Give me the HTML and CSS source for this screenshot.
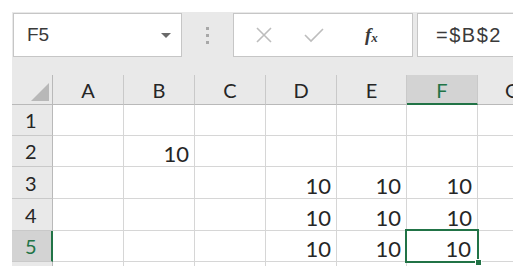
FILE: index.html
```html
<!DOCTYPE html>
<html>
<head>
<meta charset="utf-8">
<link rel="stylesheet" href="styles.css">
</head>
<body>
<div class="app">
  <div class="toolbar">
    <div class="namebox">
      <span class="name">F5</span>
      <svg class="caret" width="10" height="6" viewBox="0 0 10 6"><path d="M0 0H10L5 5Z" fill="#6a6a6a"/></svg>
    </div>
    <div class="dots"><i></i><i></i><i></i></div>
    <div class="fbuttons">
      <svg class="ico" width="20" height="20" viewBox="0 0 20 20"><path d="M3 3L17 17M17 3L3 17" stroke="#bdbdbd" stroke-width="1.6" fill="none"/></svg>
      <svg class="ico" width="22" height="20" viewBox="0 0 22 20"><path d="M2 10L8 16L20 4" stroke="#bdbdbd" stroke-width="1.6" fill="none"/></svg>
      <span class="fx">f<sub>x</sub></span>
    </div>
    <div class="finput">=$B$2</div>
  </div>
  <div class="grid">
    <div class="h corner"><svg width="18" height="18" viewBox="0 0 18 18"><path d="M18 0V18H0Z" fill="#b8b8b8"/></svg></div>
    <div class="h col">A</div>
    <div class="h col">B</div>
    <div class="h col">C</div>
    <div class="h col">D</div>
    <div class="h col">E</div>
    <div class="h col sel-col">F</div>
    <div class="h col clip">G</div>

    <div class="h row">1</div>
    <div class="c"></div><div class="c"></div><div class="c"></div><div class="c"></div><div class="c"></div><div class="c"></div><div class="c"></div>

    <div class="h row">2</div>
    <div class="c"></div><div class="c">10</div><div class="c"></div><div class="c"></div><div class="c"></div><div class="c"></div><div class="c"></div>

    <div class="h row">3</div>
    <div class="c"></div><div class="c"></div><div class="c"></div><div class="c">10</div><div class="c">10</div><div class="c">10</div><div class="c"></div>

    <div class="h row">4</div>
    <div class="c"></div><div class="c"></div><div class="c"></div><div class="c">10</div><div class="c">10</div><div class="c">10</div><div class="c"></div>

    <div class="h row sel-row">5</div>
    <div class="c"></div><div class="c"></div><div class="c"></div><div class="c">10</div><div class="c">10</div><div class="c active">10<span class="selbox"></span><span class="handle"></span></div><div class="c"></div>

    <div class="h row stub"></div>
    <div class="c stub"></div><div class="c stub"></div><div class="c stub"></div><div class="c stub"></div><div class="c stub"></div><div class="c stub"></div><div class="c stub"></div>
  </div>
</div>
</body>
</html>
```
FILE: styles.css
```css
* { box-sizing: border-box; }
body {
  margin: 0;
  background: #ffffff;
  width: 526px;
  height: 279px;
  overflow: hidden;
}
.app {
  margin: 12px 0 0 12px;
  width: 501px;
  overflow: hidden;
  background: #e9e9e9;
}
.toolbar {
  display: flex;
  align-items: flex-start;
  height: 63px;
  padding: 1px 0 0 1px;
}
.toolbar > * { flex-shrink: 0; }
.namebox {
  width: 169px;
  height: 44px;
  background: #fff;
  border: 1px solid #c6c6c6;
  display: flex;
  align-items: center;
  justify-content: space-between;
  padding: 0 10px 0 13px;
}
.name {
  font-family: "Liberation Sans", Arial, sans-serif;
  font-size: 19px;
  color: #3a3a3a;
}
.caret { margin-top: 2px; }
.dots {
  width: 51px;
  height: 44px;
  display: flex;
  flex-direction: column;
  align-items: center;
  justify-content: center;
  gap: 4px;
}
.dots i {
  display: block;
  width: 3px;
  height: 3px;
  background: #a8a8a8;
}
.fbuttons {
  width: 180px;
  height: 44px;
  background: #fff;
  border: 1px solid #c6c6c6;
  display: flex;
  align-items: center;
  padding: 0 0 0 20px;
  gap: 29px;
}
.fx {
  font-family: "Liberation Serif", "Times New Roman", serif;
  font-style: italic;
  font-weight: bold;
  font-size: 19px;
  color: #3a3a3a;
  margin-left: 11px;
}
.fx sub { font-size: 13px; vertical-align: -1px; }
.finput {
  margin-left: 4px;
  width: 120px;
  height: 44px;
  background: #fff;
  border: 1px solid #c6c6c6;
  font-family: "Liberation Sans", Arial, sans-serif;
  font-size: 20px;
  letter-spacing: 1.5px;
  color: #3a3a3a;
  padding: 10px 0 0 18px;
  white-space: nowrap;
}
.grid {
  display: grid;
  grid-template-columns: 41px 71px 71px 71px 71px 70px 71px 35px;
  grid-template-rows: 30px 31px 31px 32px 32px 31px 4px;
  background: #fff;
}
.h {
  background: #e9e9e9;
  font-family: Lato, "Open Sans", sans-serif;
  color: #262626;
  font-size: 20px;
}
.col {
  border-right: 1px solid #c9c9c9;
  border-bottom: 1px solid #b9b9b9;
  display: flex;
  align-items: center;
  justify-content: center;
  padding-top: 1px;
}
.col.clip {
  justify-content: flex-start;
  padding-left: 27px;
  border-right: none;
}
.corner {
  border-right: 1px solid #b9b9b9;
  border-bottom: 1px solid #b9b9b9;
  display: flex;
  align-items: flex-end;
  justify-content: flex-end;
  padding: 0 3px 3px 0;
}
.row {
  border-right: 1px solid #b9b9b9;
  border-bottom: 1px solid #c9c9c9;
  display: flex;
  align-items: center;
  padding-left: 13px;
}
.sel-col {
  background: #d3d3d3;
  border-bottom: 2px solid #217346;
  color: #217346;
}
.sel-row {
  background: #d3d3d3;
  border-right: 2px solid #217346;
  color: #217346;
}
.c {
  border-right: 1px solid #d6d6d6;
  border-bottom: 1px solid #d6d6d6;
  font-family: Lato, "Open Sans", sans-serif;
  font-size: 22px;
  color: #262626;
  display: flex;
  align-items: flex-end;
  justify-content: flex-end;
  padding: 0 5px 1px 0;
  line-height: 1;
}
.c:nth-child(8n) { border-right: none; }
.stub { border-bottom: none; }
.h.stub { border-bottom: none; }
.active { position: relative; padding-right: 6px; }
.selbox {
  position: absolute;
  left: -2px;
  top: -2px;
  right: -2px;
  bottom: -2px;
  border: 2px solid #217346;
}
.handle {
  position: absolute;
  right: -5px;
  bottom: -5px;
  width: 7px;
  height: 7px;
  background: #217346;
  border: 1px solid #fff;
}
```
